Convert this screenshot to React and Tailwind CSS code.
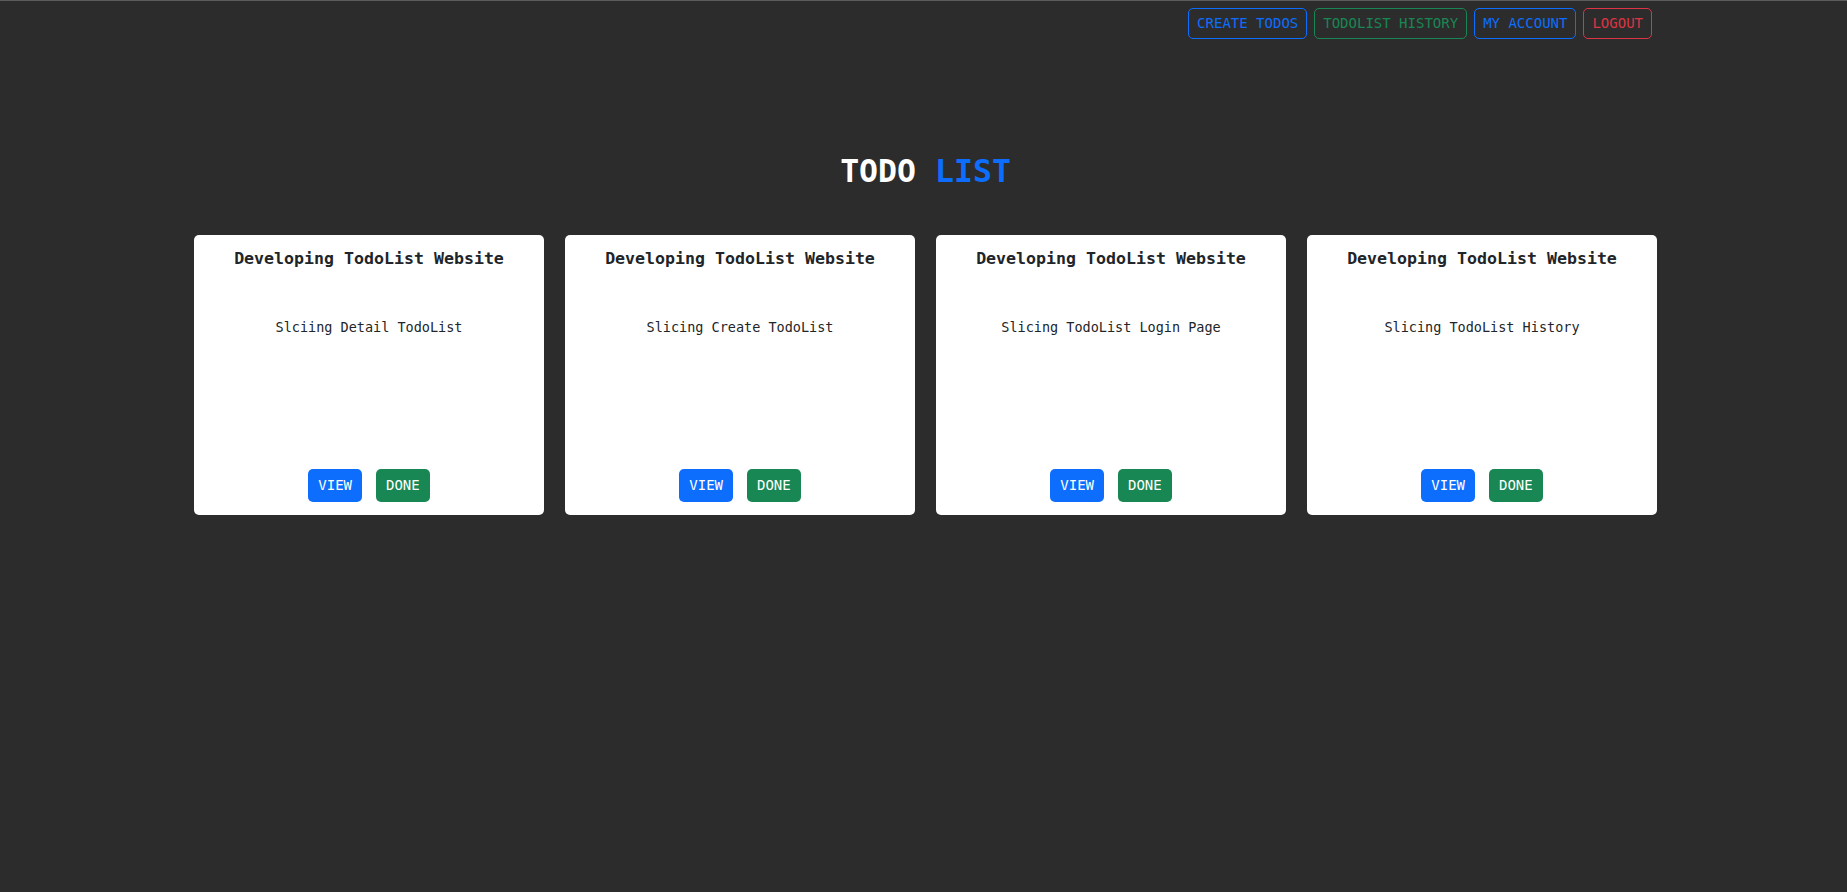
import React from 'react';

const mono = { fontFamily: '"DejaVu Sans Mono", "Liberation Mono", monospace' };

const todos = [
  { title: 'Developing TodoList Website', detail: 'Slciing Detail TodoList' },
  { title: 'Developing TodoList Website', detail: 'Slicing Create TodoList' },
  { title: 'Developing TodoList Website', detail: 'Slicing TodoList Login Page' },
  { title: 'Developing TodoList Website', detail: 'Slicing TodoList History' },
];

function NavButton({ children, className }) {
  return (
    <button
      className={`h-[31px] px-[8px] border rounded-[5px] text-[14px] leading-[21px] bg-transparent ${className}`}
    >
      {children}
    </button>
  );
}

function TodoCard({ todo }) {
  return (
    <div className="w-[350px] h-[280px] bg-white rounded-[5px] flex flex-col items-center pt-[14px] pb-[13px] text-[#212529]">
      <h5 className="text-[16.6px] leading-[20px] font-bold">{todo.title}</h5>
      <p className="mt-[48px] text-[13.5px] leading-[20px]">{todo.detail}</p>
      <div className="mt-auto flex gap-[14px]">
        <button className="h-[33px] px-[10px] rounded-[5px] bg-[#0d6efd] text-white text-[14px] leading-[21px]">
          VIEW
        </button>
        <button className="h-[33px] px-[10px] rounded-[5px] bg-[#198754] text-white text-[14px] leading-[21px]">
          DONE
        </button>
      </div>
    </div>
  );
}

export default function App() {
  return (
    <div className="min-h-screen bg-[#2c2c2c] border-t border-[#5c5c5c]" style={mono}>
      <div className="w-[1467px] mx-auto pl-[4px]">
        <nav className="pt-[7px] pr-[5px] flex justify-end gap-[7px]">
          <NavButton className="border-[#0d6efd] text-[#0d6efd]">CREATE TODOS</NavButton>
          <NavButton className="border-[#198754] text-[#198754]">TODOLIST HISTORY</NavButton>
          <NavButton className="border-[#0d6efd] text-[#0d6efd]">MY ACCOUNT</NavButton>
          <NavButton className="border-[#dc3545] text-[#dc3545]">LOGOUT</NavButton>
        </nav>

        <h1 className="mt-[113px] text-center text-[31.5px] leading-[38px] font-bold text-white">
          TODO <span className="text-[#0d6efd]">LIST</span>
        </h1>

        <div className="mt-[45px] flex justify-between">
          {todos.map((todo, index) => (
            <TodoCard key={index} todo={todo} />
          ))}
        </div>
      </div>
    </div>
  );
}
